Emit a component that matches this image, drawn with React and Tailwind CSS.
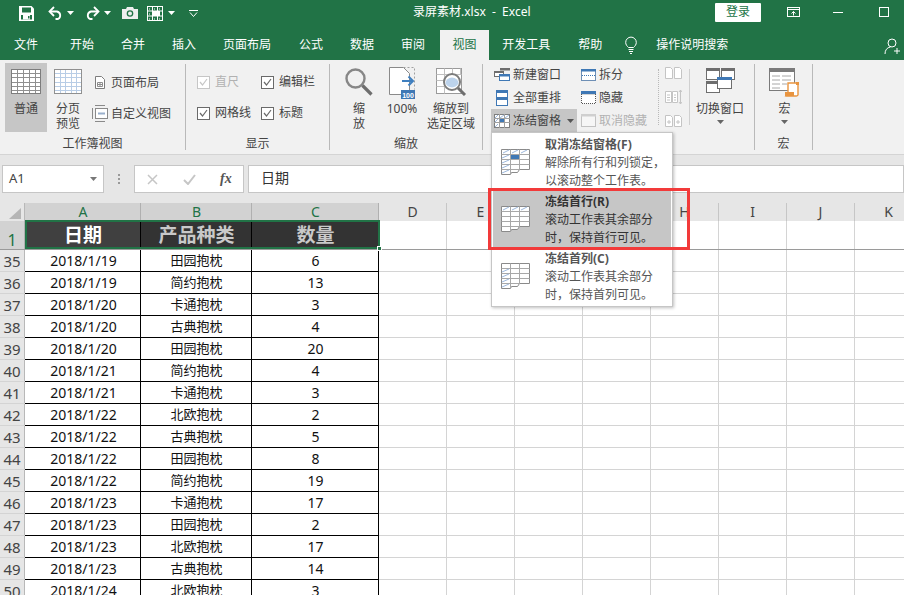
import React from 'react';

const FONT = { fontFamily: '"Noto Sans", "Noto Sans CJK SC", sans-serif' };

const rows = [
  [35, '2018/1/19', '田园抱枕', 6],
  [36, '2018/1/19', '简约抱枕', 13],
  [37, '2018/1/20', '卡通抱枕', 3],
  [38, '2018/1/20', '古典抱枕', 4],
  [39, '2018/1/20', '田园抱枕', 20],
  [40, '2018/1/21', '简约抱枕', 4],
  [41, '2018/1/21', '卡通抱枕', 3],
  [42, '2018/1/22', '北欧抱枕', 2],
  [43, '2018/1/22', '古典抱枕', 5],
  [44, '2018/1/22', '田园抱枕', 8],
  [45, '2018/1/22', '简约抱枕', 19],
  [46, '2018/1/23', '卡通抱枕', 17],
  [47, '2018/1/23', '田园抱枕', 2],
  [48, '2018/1/23', '北欧抱枕', 17],
  [49, '2018/1/23', '古典抱枕', 14],
  [50, '2018/1/24', '北欧抱枕', 3],
];

const gridCols = 'grid grid-cols-[25px_116px_111px_127px_68px_68px_68px_68px_68px_68px_68px_68px]';
const emptyCols = ['D', 'E', 'F', 'G', 'H', 'I', 'J', 'K'];

const Caret = ({ color = '#fff', className = '' }) => (
  <svg width="7" height="4" viewBox="0 0 7 4" className={className}>
    <path d="M0 0h7L3.5 4z" fill={color} />
  </svg>
);

/* ---------- title bar icons ---------- */
const SaveIcon = () => (
  <svg width="15" height="15" viewBox="0 0 15 15">
    <path d="M0 0h12.5L15 2.500V15H0z" fill="#fff" />
    <rect x="3" y="1.500" width="9" height="5" fill="#217346" />
    <rect x="2" y="9" width="11" height="4.500" fill="#217346" />
    <rect x="4" y="9" width="7" height="4.500" fill="#fff" />
    <rect x="9" y="10" width="1.500" height="2.500" fill="#217346" />
  </svg>
);
const UndoIcon = ({ flip }) => (
  <svg width="15" height="14" viewBox="0 0 15 14" className={flip ? '-scale-x-100' : ''}>
    <path d="M2 5.500h7a4 4 0 0 1 1 7.500H7.500" fill="none" stroke="#fff" strokeWidth="1.800" />
    <path d="M6 1L1.500 5.500 6 10" fill="none" stroke="#fff" strokeWidth="1.800" />
  </svg>
);
const CameraIcon = () => (
  <svg width="16" height="12" viewBox="0 0 16 12">
    <path d="M0 2h4l1-2h6l1 2h4v10H0z" fill="#eee" />
    <circle cx="8" cy="6.500" r="3.300" fill="#217346" />
    <circle cx="8" cy="6.500" r="2" fill="#eee" />
  </svg>
);
const GridQuickIcon = () => (
  <svg width="16" height="15" viewBox="0 0 16 15">
    <rect x="0.500" y="0.500" width="15" height="14" fill="none" stroke="#fff" />
    <path d="M0 5h16M0 10h16M5.500 0v15M10.500 0v15" stroke="#fff" />
    <path d="M2 3h2M7 3h2M12 3h2M2 8h2M2 13h2M7 13h2M12 13h2" stroke="#fff" strokeDasharray="1 1" />
    <rect x="5" y="5" width="8" height="5" fill="#fff" />
  </svg>
);
const CustomizeIcon = () => (
  <svg width="9" height="7" viewBox="0 0 9 7">
    <path d="M0 0.500h9" stroke="#fff" />
    <path d="M1 2.500l3.500 4L8 2.500" fill="none" stroke="#fff" />
  </svg>
);
const RibbonDisplayIcon = () => (
  <svg width="13" height="10" viewBox="0 0 13 10">
    <rect x="0.500" y="0.500" width="12" height="9" fill="none" stroke="#fff" />
    <path d="M0 2.500h13" stroke="#fff" />
    <path d="M6.500 8.500V4.500M4.500 6.500l2-2 2 2" fill="none" stroke="#fff" />
  </svg>
);
const BulbIcon = () => (
  <svg width="12" height="18" viewBox="0 0 12 18">
    <path d="M3.500 11.500C2 10 .7 8.800.7 6.400a5.300 5.300 0 0 1 10.600 0c0 2.400-1.300 3.600-2.800 5.100z" fill="none" stroke="#fff" />
    <path d="M3.500 13.500h5M4 15.500h4M5 17.500h2" stroke="#fff" />
  </svg>
);
const UserPlusIcon = () => (
  <svg width="16" height="17" viewBox="0 0 16 17">
    <circle cx="8" cy="5" r="4" fill="none" stroke="#fff" />
    <path d="M1 16c0-4 2-6.500 5.500-7M13 10v6M10 13h6" fill="none" stroke="#fff" />
  </svg>
);

/* ---------- ribbon icons ---------- */
const SheetGrid = ({ w = 30, h = 25, line = '#8f8f8f', blue }) => {
  const xs = [0.2, 0.4, 0.6, 0.8].map((f) => Math.round(w * f) + 0.5);
  const ys = [1, 2, 3, 4, 5].map((i) => Math.round((h * i) / 6) + 0.5);
  return (
    <svg width={w} height={h} viewBox={`0 0 ${w} ${h}`}>
      <rect x="0.500" y="0.500" width={w - 1} height={h - 1} fill="#fff" stroke={blue ? '#909090' : '#7d7d7d'} />
      {ys.map((y) => (
        <path key={y} d={`M1 ${y}H${w - 1}`} stroke={blue ? '#b8cde6' : line} />
      ))}
      {xs.map((x) => (
        <path key={x} d={`M${x} 1V${h - 1}`} stroke={blue ? '#b8cde6' : line} />
      ))}
    </svg>
  );
};
const PageLayoutIcon = () => (
  <svg width="12" height="13" viewBox="0 0 12 13">
    <path d="M1.500.5h6l3 3v9h-9z" fill="#fff" stroke="#7d7d7d" />
    <path d="M3.500 6.500h5v4h-5zM6 6.500v4M3.500 8.500h5" fill="none" stroke="#8c8c8c" />
  </svg>
);
const CustomViewIcon = () => (
  <svg width="16" height="17" viewBox="0 0 16 17">
    <path d="M3 .5h10M3 16.500h10" stroke="#8a8a8a" />
    <rect x="3.500" y="3.500" width="12" height="10" fill="#fff" stroke="#8a8a8a" />
    <path d="M.5 3v11" stroke="#8a8a8a" />
    <path d="M6 8.500h7" stroke="#9ab0cc" strokeWidth="2" />
  </svg>
);
const Check = ({ disabled }) => (
  <span className={`flex h-[13px] w-[13px] items-center justify-center border bg-white ${disabled ? 'border-[#c6c6c6]' : 'border-[#6a6a6a]'}`}>
    <svg width="9" height="8" viewBox="0 0 9 8">
      <path d="M1 4l2.500 3L8 1" fill="none" stroke={disabled ? '#c6c6c6' : '#6a6a6a'} strokeWidth="1.200" />
    </svg>
  </span>
);
const MagnifierIcon = () => (
  <svg width="28" height="28" viewBox="0 0 28 28">
    <circle cx="10.500" cy="10.500" r="9" fill="none" stroke="#878787" strokeWidth="2.400" />
    <path d="M17.500 17.500l9 9" stroke="#6e6e6e" strokeWidth="3.200" />
  </svg>
);
const ZoomHundredIcon = () => (
  <svg width="27" height="32" viewBox="0 0 27 32">
    <path d="M.5.500h14l6 6v21H.5z" fill="#fff" stroke="#8a8a8a" />
    <path d="M14.500.5h11v22" fill="none" stroke="#a0a0a0" strokeDasharray="2 2" />
    <path d="M13 14h11M19.500 9.500L24 14l-4.500 4.500" fill="none" stroke="#3f7fbf" strokeWidth="2" />
    <rect x="12" y="23" width="14" height="9" fill="#3f78b5" />
    <text x="19" y="30.500" textAnchor="middle" fontSize="7" fontWeight="700" fill="#fff" fontFamily="Liberation Sans">100</text>
  </svg>
);
const ZoomSelectionIcon = () => (
  <svg width="31" height="28" viewBox="0 0 31 28">
    <rect x="0.500" y="0.500" width="25" height="25" fill="#fff" stroke="#9a9a9a" />
    <path d="M.5 6.500h25M.5 12.500h8M.5 18.500h8M8.500.5v25M16.500.5v6M24.500.5v6" stroke="#c0c0c0" />
    <circle cx="16" cy="14" r="8" fill="#fff" stroke="#7c7c7c" strokeWidth="2" />
    <path d="M9.500 15a7 7 0 0 0 13 0 6 5 0 0 0-13 0z" fill="#bcd3ec" />
    <path d="M22 20l7 7" stroke="#6e6e6e" strokeWidth="3" />
  </svg>
);
const NewWindowIcon = () => (
  <svg width="16" height="13" viewBox="0 0 16 13">
    <rect x="6" y="0" width="10" height="2.500" fill="#6e6e6e" />
    <rect x="0.500" y="3.500" width="9" height="5" fill="#fff" stroke="#6e6e6e" />
    <rect x="0" y="3" width="10" height="2" fill="#6e6e6e" />
    <rect x="5.500" y="6.500" width="10" height="6" fill="#fff" stroke="#3f78b5" />
    <rect x="5" y="6" width="11" height="2.500" fill="#3f78b5" />
  </svg>
);
const ArrangeIcon = () => (
  <svg width="12" height="16" viewBox="0 0 12 16">
    <rect x="0.500" y="0.500" width="11" height="15" fill="#fff" stroke="#3f78b5" />
    <rect x="0" y="0" width="12" height="3" fill="#3f78b5" />
    <rect x="0" y="7" width="12" height="3" fill="#3f78b5" />
  </svg>
);
const FreezeSmallIcon = () => (
  <svg width="16" height="14" viewBox="0 0 16 14">
    <rect x="0.500" y="0.500" width="15" height="13" fill="#fff" stroke="#7d7d7d" />
    <path d="M0 4.500h16M0 8.500h16M5.500 0v14M10.500 0v14" stroke="#a0a0a0" />
    <path d="M1 4l3-3M6 4l4-3M11 4l4-3M1 8l3-3M1 13l3-3" stroke="#9db8dc" />
    <rect x="6" y="5" width="4" height="3" fill="#3f78b5" />
  </svg>
);
const SplitIcon = () => (
  <svg width="15" height="12" viewBox="0 0 15 12">
    <rect x="0.500" y="0.500" width="14" height="11" fill="#fff" stroke="#6e8fb5" />
    <rect x="0" y="0" width="15" height="2.500" fill="#3f78b5" />
    <path d="M1 6.500h13" stroke="#3f78b5" strokeDasharray="1 1" />
  </svg>
);
const HideIcon = () => (
  <svg width="15" height="13" viewBox="0 0 15 13">
    <rect x="0.500" y="3" width="14" height="9.500" fill="#fff" stroke="#555" strokeDasharray="1 1" />
    <rect x="0" y="0" width="15" height="3" fill="#3f78b5" />
  </svg>
);
const UnhideIcon = () => (
  <svg width="15" height="13" viewBox="0 0 15 13">
    <rect x="0.500" y="0.500" width="14" height="12" fill="#f6f6f6" stroke="#c2c2c2" />
    <rect x="0" y="0" width="15" height="2.500" fill="#cfcfcf" />
  </svg>
);
const SideBySideIcon = ({ kind }) => (
  <svg width="17" height="14" viewBox="0 0 17 14">
    {kind === 'sync' ? (
      <>
        <path d="M.5 1.500h6v11h-6zM7.500 1.500h5v11h-5z" fill="#fff" stroke="#c4c4c4" />
        <path d="M2 5h3M2 7.500h3M2 10h3M9 5h2M9 7.500h2M9 10h2M15.500 0v14M14 2l1.500-2L17 2M14 12l1.500 2 1.500-2" fill="none" stroke="#c4c4c4" />
      </>
    ) : (
      <>
        <path d="M.5 1.500h5l2 2v9h-7zM9.500 1.500h5l2 2v9h-7z" fill="#fff" stroke="#c4c4c4" />
        {kind === 'reset' && <path d="M2 8h4M4 6v4M11 8h4M13 6v4" stroke="#c4c4c4" />}
      </>
    )}
  </svg>
);
const SwitchWindowIcon = () => (
  <svg width="29" height="25" viewBox="0 0 29 25">
    <rect x="0.500" y="0.500" width="13" height="11" fill="#fff" stroke="#6e6e6e" />
    <rect x="0" y="0" width="14" height="3" fill="#6e6e6e" />
    <rect x="15.500" y="0.500" width="13" height="11" fill="#fff" stroke="#6e6e6e" />
    <rect x="15" y="0" width="14" height="3" fill="#6e6e6e" />
    <rect x="0.500" y="13.500" width="13" height="11" fill="#fff" stroke="#6e6e6e" />
    <rect x="0" y="13" width="14" height="3" fill="#6e6e6e" />
    <rect x="11.500" y="9.500" width="14" height="11" fill="#fff" stroke="#6e6e6e" />
    <rect x="11" y="9" width="15" height="3" fill="#3f78b5" />
  </svg>
);
const MacroIcon = () => (
  <svg width="31" height="29" viewBox="0 0 31 29">
    <rect x="0.500" y="0.500" width="25" height="22" fill="#fff" stroke="#7a7a7a" />
    <rect x="0" y="0" width="26" height="4" fill="#7a7a7a" />
    <path d="M3 8h8M13 8h9M3 12h8M13 12h9M3 16h8M13 16h5M3 20h8" stroke="#a8a8a8" />
    <path d="M19 15h10v12a2 2 0 0 1-2 1h-9a2 2 0 0 0 1-2z" fill="#fff" stroke="#e8943f" strokeWidth="1.400" />
    <path d="M16 24h9v4h-9z" fill="#e8943f" />
    <path d="M27 14h3v3h-3z" fill="#e8943f" />
  </svg>
);

/* freeze menu icons: hatch shows which part of the sheet stays put */
const FreezeMenuIcon = ({ mode }) => {
  const hatch = 'M2 4l6-3M11 4l6-3M20 4l6-3';
  return (
    <svg width="29" height="27" viewBox="0 0 29 27">
      <path d="M.5.500h28v20h-10l-2 3h-6l-1 2H.5z" fill="#fff" stroke="#8a8a8a" />
      <path d="M.5 5.500h28M.5 10.500h28M.5 15.500h28M.5 20.500h18M9.500.5v25M18.500.5v20" fill="none" stroke="#a8a8a8" />
      {mode !== 'col' && <path d={hatch} stroke="#9db8dc" />}
      {mode !== 'row' && <path d="M1 9l7-3M1 14l7-3M1 19l7-3M1 24l7-3" stroke="#9db8dc" />}
      {mode === 'none' && <rect x="10" y="6" width="8" height="4" fill="#3f78b5" />}
    </svg>
  );
};

/* ---------- ribbon pieces ---------- */
const Sep = () => <div className="my-[4px] h-[86px] w-px shrink-0 bg-[#b9b9b9]" />;

const GroupLabel = ({ children }) => (
  <div className="flex h-[22px] items-center justify-center pt-[2px] text-[12px] text-[#444]">{children}</div>
);

const Group = ({ label, width, children }) => (
  <div className="flex shrink-0 flex-col" style={{ width }}>
    <div className="flex h-[72px]">{children}</div>
    <GroupLabel>{label}</GroupLabel>
  </div>
);

const BigBtn = ({ icon, lines, className = '', iconBox = 'h-[33px]' }) => (
  <div className={`flex flex-col items-center text-[12px] leading-[15px] text-[#444] ${className}`}>
    <div className={`flex shrink-0 items-start justify-center ${iconBox}`}>{icon}</div>
    {lines.map((l) => (
      <div key={l} className="whitespace-nowrap">{l}</div>
    ))}
  </div>
);

const SmallBtn = ({ icon, text, disabled, className = '' }) => (
  <div className={`flex h-[23px] items-center whitespace-nowrap text-[12px] ${disabled ? 'text-[#b1b1b1]' : 'text-[#444]'} ${className}`}>
    <div className="flex w-[16px] items-center justify-center">{icon}</div>
    <span className="ml-[3px]">{text}</span>
  </div>
);

const CheckItem = ({ text, disabled }) => (
  <div className={`flex h-[18px] items-center text-[12px] ${disabled ? 'text-[#b1b1b1]' : 'text-[#444]'}`}>
    <Check disabled={disabled} />
    <span className="ml-[5px] whitespace-nowrap">{text}</span>
  </div>
);

const Ribbon = () => (
  <div className="flex h-[95px] border-b border-[#d4d4d4] bg-[#f1f1f1]">
    <Group label="工作簿视图" width={185}>
      <div className="ml-[5px] mt-[3px] flex h-[69px] w-[42px] flex-col items-center bg-[#c6c6c6] pt-[6px] text-[12px] text-[#444]">
        <SheetGrid w={30} h={25} />
        <div className="mt-[6px]">普通</div>
      </div>
      <BigBtn icon={<SheetGrid w={28} h={25} blue />} lines={['分页', '预览']} iconBox="h-[32px]" className="ml-[7px] mt-[9px] w-[28px]" />
      <div className="ml-[10px] mt-[11px] flex flex-col gap-[8px]">
        <SmallBtn icon={<PageLayoutIcon />} text="页面布局" />
        <SmallBtn icon={<CustomViewIcon />} text="自定义视图" />
      </div>
    </Group>
    <Sep />
    <Group label="显示" width={143}>
      <div className="ml-[11px] mt-[13px] flex flex-col gap-[13px]">
        <CheckItem text="直尺" disabled />
        <CheckItem text="网格线" />
      </div>
      <div className="ml-[10px] mt-[13px] flex flex-col gap-[13px]">
        <CheckItem text="编辑栏" />
        <CheckItem text="标题" />
      </div>
    </Group>
    <Sep />
    <Group label="缩放" width={152}>
      <BigBtn icon={<MagnifierIcon />} lines={['缩', '放']} className="ml-[15px] mt-[8px] w-[28px]" />
      <BigBtn icon={<ZoomHundredIcon />} lines={['100%']} className="ml-[15px] mt-[7px] w-[28px]" iconBox="h-[34px]" />
      <BigBtn icon={<ZoomSelectionIcon />} lines={['缩放到', '选定区域']} className="ml-[11px] mt-[8px] w-[48px]" />
    </Group>
    <Sep />
    <Group label="" width={271}>
      <div className="ml-[8px] mt-[3px] flex w-[86px] flex-col">
        <SmallBtn icon={<NewWindowIcon />} text="新建窗口" className="pl-[3px]" />
        <SmallBtn icon={<ArrangeIcon />} text="全部重排" className="pl-[3px]" />
        <div className="flex h-[23px] items-center whitespace-nowrap bg-[#c6c6c6] pl-[3px] text-[12px] text-[#444]">
          <div className="flex w-[16px] items-center justify-center"><FreezeSmallIcon /></div>
          <span className="ml-[3px]">冻结窗格</span>
          <Caret color="#555" className="ml-[6px]" />
        </div>
      </div>
      <div className="ml-[3px] mt-[3px] flex w-[78px] flex-col">
        <SmallBtn icon={<SplitIcon />} text="拆分" />
        <SmallBtn icon={<HideIcon />} text="隐藏" />
        <SmallBtn icon={<UnhideIcon />} text="取消隐藏" disabled />
      </div>
      <div className="mt-[9px] h-[56px] w-px border-l border-dotted border-[#b9b9b9]" />
      <div className="ml-[6px] mt-[6px] flex flex-col gap-[10px]">
        <SideBySideIcon kind="top" />
        <SideBySideIcon kind="sync" />
        <SideBySideIcon kind="reset" />
      </div>
      <div className="ml-[7px] mt-[9px] h-[56px] w-px bg-[#d0d0d0]" />
      <div className="ml-[6px] mt-[8px] flex w-[48px] flex-col items-center text-[12px] leading-[15px] text-[#444]">
        <div className="h-[33px] shrink-0"><SwitchWindowIcon /></div>
        <div className="whitespace-nowrap">切换窗口</div>
        <Caret color="#666" className="mt-[4px]" />
      </div>
    </Group>
    <Sep />
    <Group label="宏" width={57}>
      <div className="ml-[14px] mt-[8px] flex w-[31px] flex-col items-center text-[12px] leading-[15px] text-[#444]">
        <div className="h-[33px] shrink-0"><MacroIcon /></div>
        <div>宏</div>
        <Caret color="#666" className="mt-[4px]" />
      </div>
    </Group>
    <Sep />
  </div>
);

/* ---------- top chrome ---------- */
const TitleBar = () => (
  <div className="flex h-[30px] items-center bg-[#217346] text-white">
    <div className="mb-[4px] ml-[19px] flex items-center">
      <SaveIcon />
      <div className="ml-[14px]"><UndoIcon /></div>
      <Caret className="ml-[4px]" />
      <div className="ml-[11px]"><UndoIcon flip /></div>
      <Caret className="ml-[4px]" />
      <div className="ml-[11px]"><CameraIcon /></div>
      <div className="ml-[9px]"><GridQuickIcon /></div>
      <Caret className="ml-[5px]" />
      <div className="ml-[14px]"><CustomizeIcon /></div>
    </div>
    <div className="mb-[6px] ml-[215px] whitespace-pre text-[12px]">录屏素材.xlsx  -  Excel</div>
    <div className="ml-auto flex items-center">
      <div className="mb-[6px] flex h-[19px] w-[46px] items-center justify-center rounded-[1px] bg-white text-[12px] text-[#217346]">登录</div>
      <div className="mb-[6px] ml-[26px]"><RibbonDisplayIcon /></div>
      <div className="mb-[6px] ml-[33px] h-px w-[10px] bg-white" />
      <div className="mb-[6px] ml-[36px] mr-[15px] h-[10px] w-[10px] border border-white" />
    </div>
  </div>
);

const tabs = [
  ['文件', 14], ['开始', 32], ['合并', 27], ['插入', 27], ['页面布局', 27],
  ['公式', 28], ['数据', 27], ['审阅', 27],
];

const TabBar = () => (
  <div className="flex h-[30px] items-center bg-[#217346] text-[12px] text-white">
    {tabs.map(([t, ml]) => (
      <span key={t} style={{ marginLeft: ml }}>{t}</span>
    ))}
    <div className="ml-[15px] flex h-full w-[49px] items-center justify-center bg-[#f1f1f1] text-[#217346]">视图</div>
    <span className="ml-[13px]">开发工具</span>
    <span className="ml-[28px]">帮助</span>
    <div className="ml-[23px] flex"><BulbIcon /></div>
    <span className="ml-[19px]">操作说明搜索</span>
    <div className="ml-auto mr-[4px] mt-[2px]"><UserPlusIcon /></div>
  </div>
);

const FormulaBar = () => (
  <div className="flex h-[48px] items-start bg-[#e6e6e6] pl-[2px] pt-[10px]">
    <div className="flex h-[28px] w-[102px] items-center justify-between border border-[#c6c6c6] bg-white px-[6px] text-[13px] text-[#444]">
      <span>A1</span>
      <Caret color="#777" />
    </div>
    <div className="flex h-[28px] w-[30px] flex-col items-center justify-center gap-[2px]">
      <span className="h-[2px] w-[2px] bg-[#999]" />
      <span className="h-[2px] w-[2px] bg-[#999]" />
      <span className="h-[2px] w-[2px] bg-[#999]" />
    </div>
    <div className="flex h-[28px] w-[110px] items-center border border-[#c6c6c6] bg-white text-[#777]">
      <svg width="11" height="11" viewBox="0 0 11 11" className="ml-[12px]">
        <path d="M1 1l9 9M10 1l-9 9" stroke="#c6c6c6" strokeWidth="1.500" />
      </svg>
      <svg width="13" height="11" viewBox="0 0 13 11" className="ml-[25px]">
        <path d="M1 6l4 4 7-9" fill="none" stroke="#c6c6c6" strokeWidth="2" />
      </svg>
      <span className="ml-[24px] text-[14px] font-bold italic leading-none text-[#555]" style={{ fontFamily: '"Liberation Serif", serif' }}>fx</span>
    </div>
    <div className="ml-[4px] flex h-[28px] flex-1 items-center border border-[#c6c6c6] bg-white pb-[3px] pl-[12px] text-[14px] text-[#333]">日期</div>
  </div>
);

/* ---------- sheet ---------- */
const Sheet = () => (
  <div className="relative flex-1 overflow-hidden bg-white text-[14px] leading-none text-[#111]">
    {/* column header row */}
    <div className={`${gridCols} h-[18px]`}>
      <div className="relative border-r border-[#b8b8b8] bg-[#e6e6e6]">
        <svg width="13" height="12" viewBox="0 0 13 12" className="absolute bottom-[1px] right-[2px]">
          <path d="M12 0v11H0z" fill="#b5b5b5" />
        </svg>
      </div>
      {['A', 'B', 'C'].map((c) => (
        <div key={c} className="flex items-center justify-center border-r border-[#b0b0b0] bg-[#d2d2d2] pl-[1px] text-[14px] text-[#217346]">{c}</div>
      ))}
      {emptyCols.map((c) => (
        <div key={c} className="flex items-center justify-center border-r border-[#c6c6c6] bg-[#e6e6e6] text-[14px] text-[#444]">{c}</div>
      ))}
    </div>
    {/* row 1 */}
    <div className={`${gridCols} h-[29px] border-b border-[#9a9a9a]`}>
      <div className="flex items-end justify-center border-r border-[#b0b0b0] bg-[#d2d2d2] text-[16px] leading-[18px] text-[#217346]">1</div>
      {['日期', '产品种类', '数量'].map((t, i) => (
        <div key={t} className={`flex items-center justify-center border-r border-black pl-[1px] pt-[1px] text-[19px] font-bold ${i === 0 ? 'bg-[#404040] text-white' : 'bg-[#333] text-[#c9c9c9]'}`}>{t}</div>
      ))}
      {emptyCols.map((c) => (
        <div key={c} className="border-r border-[#d4d4d4]" />
      ))}
    </div>
    {/* data rows */}
    {rows.map(([n, d, p, q]) => (
      <div key={n} className={`${gridCols} h-[22px] border-b border-[#d4d4d4]`}>
        <div className="flex items-end justify-center border-r border-[#b8b8b8] bg-[#e6e6e6] text-[15px] leading-[20px] text-[#444]">{n}</div>
        <div className="-mb-px flex items-center justify-center border-b border-r border-black pl-[2px]">{d}</div>
        <div className="-mb-px flex items-center justify-center border-b border-r border-black pl-[1px] text-[13px]">{p}</div>
        <div className="-mb-px flex items-center justify-center border-b border-r border-black pl-[1px]">{q}</div>
        {emptyCols.map((c) => (
          <div key={c} className="border-r border-[#d4d4d4]" />
        ))}
      </div>
    ))}
    {/* selection outline over A1:C1 */}
    <div className="pointer-events-none absolute left-[25px] top-[17px] h-[29px] w-[355px] border-2 border-[#217346]" />
    <div className="absolute left-[377px] top-[43px] h-[5px] w-[5px] border border-white bg-[#217346]" />
  </div>
);

const MenuItem = ({ mode, title, lines, active }) => (
  <div className={`flex h-[57px] ${active ? 'bg-[#c6c6c6]' : ''}`}>
    <div className="ml-[8px] mt-[15px] w-[29px]"><FreezeMenuIcon mode={mode} /></div>
    <div className={`ml-[15px] pt-[2px] text-[12px] leading-[18px] ${active ? 'text-[#333]' : 'text-[#555]'}`}>
      <div className="font-bold">{title}</div>
      {lines.map((l) => (
        <div key={l}>{l}</div>
      ))}
    </div>
  </div>
);

export default function App() {
  return (
    <div className="relative flex h-[595px] w-[904px] flex-col overflow-hidden" style={FONT}>
      <TitleBar />
      <TabBar />
      <Ribbon />
      <FormulaBar />
      <Sheet />

      {/* freeze panes dropdown */}
      <div className="absolute left-[491px] top-[132px] w-[182px] border border-[#c6c6c6] bg-white p-px shadow-[1px_1px_3px_rgba(0,0,0,0.25)]">
        <MenuItem mode="none" title="取消冻结窗格(F)" lines={['解除所有行和列锁定，', '以滚动整个工作表。']} />
        <MenuItem mode="row" title="冻结首行(R)" lines={['滚动工作表其余部分', '时，保持首行可见。']} active />
        <MenuItem mode="col" title="冻结首列(C)" lines={['滚动工作表其余部分', '时，保持首列可见。']} />
      </div>
      {/* red annotation */}
      <div className="pointer-events-none absolute left-[488px] top-[188px] h-[62px] w-[202px] border-[3px] border-[#f23a3a]" />
    </div>
  );
}
